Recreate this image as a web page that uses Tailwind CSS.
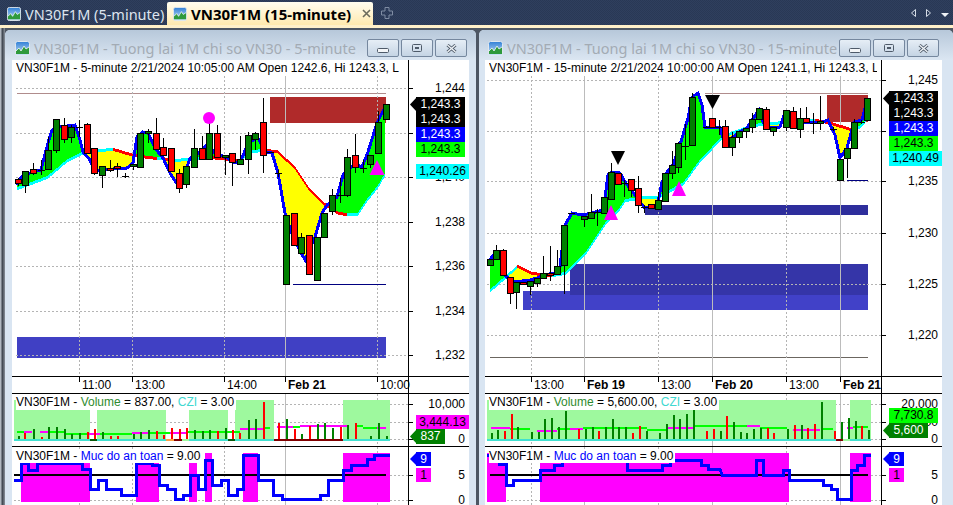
<!DOCTYPE html>
<html lang="en">
<head>
    <meta charset="UTF-8">
    <title>VN30F1M charts</title>
    <script src="https://cdn.jsdelivr.net/npm/@tailwindcss/browser@4"></script>
</head>
<body class="w-[953px] h-[505px] overflow-hidden bg-[#d9e5f2] font-['Liberation_Sans',sans-serif] text-[12px] leading-[14px] text-black">
    <svg class="absolute w-0 h-0">
        <defs>
            <linearGradient id="sky" x1="0" y1="0" x2="0" y2="1"><stop offset="0" stop-color="#2f7fd6"/><stop offset="1" stop-color="#cfe6fa"/></linearGradient>
        </defs>
        <symbol id="chartIcon" viewBox="0 0 15 15">
            <rect x="0.5" y="0.5" width="14" height="14" rx="2" fill="url(#sky)" stroke="#dfe7ef"/>
            <path d="M1 13 L1 10 L4 7 L6 10 L9 5 L11 8 L14 6 L14 13 Z" fill="#2f9a3c"/>
            <path d="M1 10 L4 7 L6 10 L9 5 L11 8 L14 6" fill="none" stroke="#f4f8fb" stroke-width="0.8"/>
        </symbol>
    </svg>

    <!-- Tab strip -->
    <div class="h-[25px] flex items-end relative bg-[repeating-conic-gradient(#2f3f5e_0_25%,#293855_0_50%)] bg-[length:2px_2px]">
        <div class="w-[167px] h-[23px] flex items-center pl-[7px] gap-[4px] font-['Noto_Sans',sans-serif] text-[14.5px] whitespace-nowrap text-[#dde4ee]">
            <svg class="w-[14px] h-[14px]"><use href="#chartIcon"/></svg>
            <span>VN30F1M (5-minute)</span>
        </div>
        <div class="w-[206px] h-[23px] flex items-center pl-[6px] gap-[4px] rounded-t-[2px] bg-gradient-to-b from-[#fffdf0] to-[#ffe9ae] font-['Noto_Sans',sans-serif] text-[15px] font-bold whitespace-nowrap text-black">
            <svg class="w-[14px] h-[14px]"><use href="#chartIcon"/></svg>
            <span>VN30F1M (15-minute)</span>
            <svg class="w-[9px] h-[9px] ml-[7px]" viewBox="0 0 9 9"><path d="M1 1 L8 8 M8 1 L1 8" stroke="#6b6b5c" stroke-width="1.6"/></svg>
        </div>
        <svg class="w-[12px] h-[12px] ml-[8px] mb-[6px]" viewBox="0 0 12 12"><path d="M4 .5H8V4H11.5V8H8V11.5H4V8H.5V4H4Z" fill="none" stroke="#7f8ca3"/></svg>
        <div class="ml-auto flex items-center gap-[10px] pr-[4px] mb-[8px]">
            <svg class="w-[5px] h-[8px]" viewBox="0 0 5 8"><path d="M4.5 .5V7.5L.5 4Z" fill="none" stroke="#d5dce6"/></svg>
            <svg class="w-[5px] h-[8px]" viewBox="0 0 5 8"><path d="M.5 .5V7.5L4.5 4Z" fill="none" stroke="#d5dce6"/></svg>
            <svg class="w-[8px] h-[4px] mt-[3px]" viewBox="0 0 8 4"><path d="M0 0H8L4 4Z" fill="#eef2f6"/></svg>
        </div>
    </div>
    <div class="h-[3px] bg-[#fff0c9]"></div>

    <div class="h-[477px] flex bg-[#4d5663]">
        <div class="w-[5px] bg-gradient-to-r from-[#cfd6de] via-[#444b55] to-[#8b929b]"></div>

        <!-- Left window -->
        <div class="w-[471px] mt-[2px] rounded-t-[5px] bg-[#d9e5f2]">
            <div class="h-[30px] flex items-center pt-[6px] pl-[10px] pr-[9px] rounded-t-[5px] bg-gradient-to-b from-[#b7c8da] to-[#dbe6f2]">
                <svg class="w-[15px] h-[15px]"><use href="#chartIcon"/></svg>
                <span class="ml-[4px] font-['Noto_Sans',sans-serif] text-[14.5px] leading-[18px] whitespace-nowrap text-[#a3abb4]">VN30F1M - Tuong lai 1M chi so VN30 - 5-minute</span>
                <div class="ml-auto flex gap-[2px]">
                    <button class="w-[32px] h-[18px] flex items-center justify-center rounded-[2px] border border-[#75879e] bg-gradient-to-b from-[#e6eef6] to-[#c5d4e4]"><svg class="w-[12px] h-[5px] mt-[4px]" viewBox="0 0 12 5"><rect x=".5" y=".5" width="11" height="4" rx="1" fill="#f4f6f8" stroke="#4e5a69"/></svg></button>
                    <button class="w-[32px] h-[18px] flex items-center justify-center rounded-[2px] border border-[#75879e] bg-gradient-to-b from-[#e6eef6] to-[#c5d4e4]"><svg class="w-[10px] h-[8px]" viewBox="0 0 10 8"><rect x=".5" y=".5" width="9" height="7" rx="1" fill="none" stroke="#4e5a69"/><rect x="3" y="3" width="4" height="2" fill="#4e5a69"/></svg></button>
                    <button class="w-[32px] h-[18px] flex items-center justify-center rounded-[2px] border border-[#75879e] bg-gradient-to-b from-[#e6eef6] to-[#c5d4e4]"><svg class="w-[11px] h-[9px]" viewBox="0 0 11 9"><path d="M1.5 1 L9.5 8 M9.5 1 L1.5 8" stroke="#4e5a69" stroke-width="3"/><path d="M1.5 1 L9.5 8 M9.5 1 L1.5 8" stroke="#eef2f6" stroke-width="1.4"/></svg></button>
                </div>
            </div>
            <div class="ml-[7px] w-[457px]">
                <div class="flex h-[317px] border-b border-black">
                    <div class="relative w-[396px] bg-white">
                        <svg id="priceL" class="block" width="396" height="316" viewBox="12 60 396 316"></svg>
                        <div class="absolute left-[4px] top-[1px] w-[386px] h-[14px] overflow-hidden whitespace-nowrap">VN30F1M - 5-minute 2/21/2024 10:05:00 AM Open 1242.6, Hi 1243.3, L</div>
                    </div>
                    <div id="priceAxisL" class="relative w-[61px] bg-white border-l border-black"></div>
                </div>
                <div class="flex h-[17px] border-b border-black">
                    <div id="timeL" class="relative w-[396px] bg-white"></div>
                    <div class="w-[61px] bg-white border-l border-black"></div>
                </div>
                <div class="flex h-[53px] border-b border-black">
                    <div class="relative w-[396px] bg-white">
                        <svg id="volL" class="block" width="396" height="52" viewBox="12 394 396 52"></svg>
                        <div class="absolute left-[4px] top-0 h-[16px] leading-[17px] pr-[2px] bg-white whitespace-nowrap">VN30F1M - <span class="text-[#2e8b2e]">Volume</span> = 837.00, <span class="text-[#40d8d0]">CZI</span> = 3.00</div>
                    </div>
                    <div id="volAxisL" class="relative w-[61px] bg-white border-l border-black"></div>
                </div>
                <div class="flex h-[58px]">
                    <div class="relative w-[396px] bg-white">
                        <svg id="safeL" class="block" width="396" height="58" viewBox="12 447 396 58"></svg>
                        <div class="absolute left-[4px] top-[2px] h-[14px] pr-[2px] bg-white whitespace-nowrap">VN30F1M - <span class="text-[#0000ff]">Muc do an toan</span> = 9.00</div>
                    </div>
                    <div id="safeAxisL" class="relative w-[61px] bg-white border-l border-black"></div>
                </div>
            </div>
        </div>

        <div class="w-[3px]"></div>

        <!-- Right window -->
        <div class="w-[474px] mt-[2px] rounded-t-[5px] bg-[#d9e5f2]">
            <div class="h-[30px] flex items-center pt-[6px] pl-[9px] pr-[14px] rounded-t-[5px] bg-gradient-to-b from-[#b7c8da] to-[#dbe6f2]">
                <svg class="w-[15px] h-[15px]"><use href="#chartIcon"/></svg>
                <span class="ml-[4px] font-['Noto_Sans',sans-serif] text-[14.5px] leading-[18px] whitespace-nowrap text-[#a3abb4]">VN30F1M - Tuong lai 1M chi so VN30 - 15-minute</span>
                <div class="ml-auto flex gap-[2px]">
                    <button class="w-[32px] h-[18px] flex items-center justify-center rounded-[2px] border border-[#75879e] bg-gradient-to-b from-[#e6eef6] to-[#c5d4e4]"><svg class="w-[12px] h-[5px] mt-[4px]" viewBox="0 0 12 5"><rect x=".5" y=".5" width="11" height="4" rx="1" fill="#f4f6f8" stroke="#4e5a69"/></svg></button>
                    <button class="w-[32px] h-[18px] flex items-center justify-center rounded-[2px] border border-[#75879e] bg-gradient-to-b from-[#e6eef6] to-[#c5d4e4]"><svg class="w-[10px] h-[8px]" viewBox="0 0 10 8"><rect x=".5" y=".5" width="9" height="7" rx="1" fill="none" stroke="#4e5a69"/><rect x="3" y="3" width="4" height="2" fill="#4e5a69"/></svg></button>
                    <button class="w-[32px] h-[18px] flex items-center justify-center rounded-[2px] border border-[#75879e] bg-gradient-to-b from-[#e6eef6] to-[#c5d4e4]"><svg class="w-[11px] h-[9px]" viewBox="0 0 11 9"><path d="M1.5 1 L9.5 8 M9.5 1 L1.5 8" stroke="#4e5a69" stroke-width="3"/><path d="M1.5 1 L9.5 8 M9.5 1 L1.5 8" stroke="#eef2f6" stroke-width="1.4"/></svg></button>
                </div>
            </div>
            <div class="ml-[6px] w-[457px]">
                <div class="flex h-[317px] border-b border-black">
                    <div class="relative w-[396px] bg-white">
                        <svg id="priceR" class="block" width="396" height="316" viewBox="485 60 396 316"></svg>
                        <div class="absolute left-[4px] top-[1px] w-[388px] h-[14px] overflow-hidden whitespace-nowrap">VN30F1M - 15-minute 2/21/2024 10:00:00 AM Open 1241.1, Hi 1243.3, L</div>
                    </div>
                    <div id="priceAxisR" class="relative w-[61px] bg-white border-l border-black"></div>
                </div>
                <div class="flex h-[17px] border-b border-black">
                    <div id="timeR" class="relative w-[396px] bg-white"></div>
                    <div class="w-[61px] bg-white border-l border-black"></div>
                </div>
                <div class="flex h-[53px] border-b border-black">
                    <div class="relative w-[396px] bg-white">
                        <svg id="volR" class="block" width="396" height="52" viewBox="485 394 396 52"></svg>
                        <div class="absolute left-[4px] top-0 h-[16px] leading-[17px] pr-[2px] bg-white whitespace-nowrap">VN30F1M - <span class="text-[#2e8b2e]">Volume</span> = 5,600.00, <span class="text-[#40d8d0]">CZI</span> = 3.00</div>
                    </div>
                    <div id="volAxisR" class="relative w-[61px] bg-white border-l border-black"></div>
                </div>
                <div class="flex h-[58px]">
                    <div class="relative w-[396px] bg-white">
                        <svg id="safeR" class="block" width="396" height="58" viewBox="485 447 396 58"></svg>
                        <div class="absolute left-[4px] top-[2px] h-[14px] pr-[2px] bg-white whitespace-nowrap">VN30F1M - <span class="text-[#0000ff]">Muc do an toan</span> = 9.00</div>
                    </div>
                    <div id="safeAxisR" class="relative w-[61px] bg-white border-l border-black"></div>
                </div>
            </div>
        </div>
    </div>

    <script>
        const GREEN = "#008000", RED = "#ff0000";

        // [x, bodyTop, bodyBottom, wickTop, wickBottom, colour]
        const candlesL = [
            [18,179,183,178,186,RED],[25,171,185,171,193,GREEN],[33,169,173,163,175,RED],[41,170,171,160,175,GREEN],
            [48,150,169,137,170,GREEN],[56,119,150,119,153,GREEN],[64,125,139,118,143,RED],[71,127,137,125,143,GREEN],
            [79,127,128,120,137,GREEN],[87,124,153,123,153,RED],[94,148,173,148,175,RED],[102,166,175,166,188,GREEN],
            [110,168,170,160,172,RED],[117,166,168,163,177,RED],[125,176,176,173,178,GREEN],[133,164,166,164,170,GREEN],
            [140,133,167,133,167,GREEN],[148,131,133,129,143,GREEN],[156,133,149,118,149,RED],[163,147,155,138,155,RED],
            [171,148,171,148,171,RED],[179,173,188,169,193,RED],[186,166,184,166,188,GREEN],[194,148,167,129,168,GREEN],
            [202,148,159,136,159,RED],[209,133,159,123,159,GREEN],[217,133,157,125,157,RED],[225,155,157,155,175,GREEN],
            [232,153,162,153,186,RED],[240,159,164,136,164,GREEN],[248,135,159,132,174,GREEN],[255,133,139,132,150,GREEN],
            [263,122,155,98,173,RED],[270,152,152,152,153,GREEN],[278,173,173,170,177,GREEN],[286,215,284,215,284,GREEN],
            [294,213,245,213,245,RED],[301,237,253,233,253,GREEN],[309,235,274,235,274,RED],[317,237,280,237,280,GREEN],
            [324,213,237,213,237,GREEN],[332,195,211,189,215,GREEN],[340,195,195,178,203,GREEN],[347,157,195,149,197,GREEN],
            [355,155,167,134,173,RED],[363,168,168,160,173,GREEN],[370,155,164,155,168,GREEN],[378,122,153,111,153,GREEN],
            [386,104,119,104,119,GREEN]
        ];
        const fastL = [[17,185],[22,176],[33,172],[41,170],[48,143],[52,130],[60,127],[75,125],[80,140],[83,152],[90,160],[94,170],[102,170],[113,169],[127,168],[133,163],[137,137],[143,132],[148,133],[155,148],[163,158],[170,173],[177,184],[183,180],[190,158],[200,152],[209,142],[213,152],[227,158],[233,162],[240,163],[248,143],[258,138],[265,152],[272,153],[278,173],[285,213],[293,237],[305,260],[315,237],[322,213],[327,205],[337,197],[343,175],[355,164],[362,167],[368,152],[377,123],[385,107]];
        const slowL = [[17,188],[47,177],[67,160],[83,152],[97,150],[113,149],[117,150],[133,155],[157,158],[163,158],[170,160],[190,159],[210,157],[240,160],[250,151],[265,150],[277,151],[295,168],[308,188],[323,203],[338,213],[347,214],[357,214],[368,198],[377,187],[385,173]];

        const candlesR = [
            [490,259,265,259,265,GREEN],[496,250,259,245,259,GREEN],[503,250,275,249,275,RED],[510,277,293,277,304,RED],
            [516,282,292,282,309,GREEN],[523,282,284,282,284,RED],[530,281,286,281,295,GREEN],[537,278,283,278,287,GREEN],
            [543,273,278,256,278,GREEN],[550,273,275,246,281,RED],[557,266,274,250,274,GREEN],[564,225,265,225,294,GREEN],
            [571,213,213,213,214,GREEN],[584,216,219,216,227,GREEN],[591,212,218,194,218,GREEN],[597,212,212,209,226,GREEN],
            [604,197,213,197,213,GREEN],[611,172,199,163,199,GREEN],[618,173,184,173,184,RED],[624,183,183,180,197,GREEN],
            [631,179,190,179,197,RED],[638,188,205,176,213,RED],[644,207,207,205,213,GREEN],[651,204,208,204,208,RED],
            [658,200,209,192,209,GREEN],[665,173,201,173,201,GREEN],[672,165,173,151,179,GREEN],[678,143,167,142,173,GREEN],
            [685,146,146,124,160,GREEN],[692,97,145,93,145,GREEN],[712,118,127,118,127,RED],[706,127,127,126,128,GREEN],
            [719,127,127,120,135,GREEN],[725,126,147,120,147,RED],[732,137,147,132,156,GREEN],[739,131,137,131,143,GREEN],
            [746,128,131,128,138,GREEN],[752,119,127,113,133,GREEN],[759,108,119,108,119,GREEN],[766,109,129,107,129,RED],
            [773,127,131,127,136,GREEN],[786,110,127,110,131,GREEN],[793,111,128,107,128,RED],[800,118,129,108,138,GREEN],
            [806,118,122,107,122,RED],[813,123,123,113,134,GREEN],[820,121,123,96,130,GREEN],[833,129,129,127,131,GREEN],
            [840,159,180,159,180,GREEN],[847,148,158,148,178,GREEN],[854,122,148,119,148,GREEN],[861,122,122,120,124,GREEN],
            [867,98,120,98,120,GREEN]
        ];
        const fastR = [[490,260],[493,255],[500,252],[505,275],[510,280],[515,282],[530,280],[537,278],[543,275],[555,273],[560,267],[565,225],[572,213],[582,215],[592,213],[603,210],[605,198],[608,175],[612,172],[620,173],[625,182],[633,192],[638,200],[645,208],[657,207],[662,182],[667,172],[673,165],[680,145],[688,118],[692,97],[698,93],[702,105],[705,127],[720,127],[723,138],[732,138],[739,132],[747,128],[752,120],[759,110],[765,127],[773,128],[780,127],[785,112],[793,118],[800,122],[820,123],[828,120],[835,135],[840,158],[847,148],[854,122],[862,120],[867,100]];
        const slowR = [[490,290],[505,277],[517,266],[532,273],[552,275],[558,274],[565,273],[585,253],[605,223],[618,210],[625,200],[645,197],[658,197],[683,183],[700,160],[722,137],[733,132],[747,127],[760,124],[800,120.5],[815,120],[828,122],[853,130],[860,126],[868,117]];

        // [x, top, colour]
        const volL = [[18,436,GREEN],[24,433,RED],[33,429,GREEN],[41,437,RED],[48,427,GREEN],[56,427,GREEN],[64,429,GREEN],[71,434,GREEN],[79,433,GREEN],[87,432,RED],[94,429,RED],[102,432,GREEN],[110,436,RED],[117,436,RED],[133,434,GREEN],[140,432,GREEN],[148,430,GREEN],[156,431,RED],[163,435,RED],[171,428,RED],[179,429,RED],[186,428,RED],[194,430,GREEN],[202,431,GREEN],[209,430,GREEN],[217,431,RED],[225,428,GREEN],[232,430,RED],[239,433,RED],[248,420,GREEN],[255,419,GREEN],[263,402,RED],[278,423,RED],[286,419,GREEN],[294,429,RED],[301,434,GREEN],[309,426,RED],[317,424,GREEN],[324,423,GREEN],[332,428,GREEN],[340,427,RED],[347,425,GREEN],[355,423,RED],[370,436,GREEN],[378,423,GREEN],[386,436,GREEN]];
        const volR = [[491,433,GREEN],[497,430,GREEN],[504,431,RED],[511,414,RED],[517,427,GREEN],[531,432,GREEN],[538,432,GREEN],[544,419,GREEN],[551,418,GREEN],[558,427,GREEN],[565,411,GREEN],[578,429,RED],[585,429,GREEN],[592,427,GREEN],[598,431,RED],[605,427,GREEN],[612,419,GREEN],[618,427,GREEN],[625,427,GREEN],[632,433,RED],[639,426,RED],[646,431,GREEN],[659,433,GREEN],[666,424,GREEN],[673,415,GREEN],[679,419,GREEN],[686,414,GREEN],[693,410,GREEN],[706,431,RED],[713,429,RED],[720,431,GREEN],[726,416,RED],[733,422,GREEN],[740,432,GREEN],[746,433,GREEN],[753,429,GREEN],[760,428,GREEN],[767,428,RED],[773,433,RED],[787,429,GREEN],[794,425,RED],[801,425,GREEN],[807,428,RED],[814,424,RED],[821,402,GREEN],[834,431,RED],[841,422,GREEN],[848,418,GREEN],[855,421,GREEN],[861,426,RED],[868,430,GREEN]];

        // [x1, x2, y, colour] moving average pieces on the volume pane
        const MAG = "#ff00ff", LIME = "#00ff00";
        const maL = [[17,24,431,LIME],[24,32,431,MAG],[40,48,431,MAG],[48,65,431,LIME],[65,87,433,LIME],[87,100,433,MAG],[100,132,433,LIME],[132,150,432,MAG],[150,170,432,LIME],[170,186,432,MAG],[186,240,431,LIME],[240,263,428,MAG],[263,270,427,LIME],[277,293,426,MAG],[293,300,426,LIME],[300,347,425,MAG],[355,363,425,LIME],[363,377,427,LIME],[377,386,427,MAG]];
        const maR = [[491,510,427,MAG],[510,530,428,LIME],[537,557,430,MAG],[557,570,428,LIME],[570,583,428,MAG],[583,647,427,LIME],[647,667,429,LIME],[667,693,427,MAG],[693,760,425,LIME],[747,760,425,MAG],[760,787,427,LIME],[793,820,429,MAG],[823,833,428,LIME],[847,853,427,MAG],[853,868,426,LIME]];

        const safeLineL = [[14,480],[21,480],[21,463],[28,463],[28,470],[37,470],[37,463],[82,463],[82,469],[90,469],[90,489],[98,489],[98,480],[106,480],[106,489],[121,489],[121,495],[136,495],[136,463],[152,463],[152,465],[159,465],[159,485],[167,485],[167,489],[175,489],[175,499],[183,499],[183,495],[190,495],[190,475],[198,475],[198,489],[205,489],[205,460],[212,460],[212,485],[221,485],[221,480],[228,480],[228,495],[237,495],[237,489],[243,489],[243,455],[258,455],[258,480],[273,480],[273,495],[282,495],[282,499],[320,499],[320,495],[328,495],[328,480],[343,480],[343,470],[351,470],[351,465],[367,465],[367,459],[374,459],[374,455],[390,455]];
        const safeLineR = [[487,455],[499,455],[499,464],[506,464],[506,485],[513,485],[513,480],[540,480],[540,470],[554,470],[554,465],[562,465],[562,460],[627,460],[627,470],[662,470],[662,465],[670,465],[670,460],[701,460],[701,465],[708,465],[708,469],[720,469],[722,475],[756,475],[756,460],[763,460],[763,475],[783,475],[783,470],[789,470],[789,480],[823,480],[823,485],[831,485],[831,489],[837,489],[837,499],[851,499],[851,470],[857,470],[857,465],[864,465],[864,455],[871,455]];

        function rect(x, y, w, h, fill) {
            return `<rect x="${x}" y="${y}" width="${w}" height="${h}" fill="${fill}" shape-rendering="crispEdges"/>`;
        }
        function tri(a, b, c, fill) {
            return `<polygon points="${a} ${b} ${c}" fill="${fill}"/>`;
        }
        function at(points, x) {
            for (let i = 1; i < points.length; i++) {
                const [x0, y0] = points[i - 1], [x1, y1] = points[i];
                if (x <= x1) return y0 + (y1 - y0) * (x - x0) / (x1 - x0);
            }
            return points[points.length - 1][1];
        }
        // Grid: dotted lines on the hour ticks, solid grey on day breaks
        function grid(x0, x1, y0, y1, dotted, solid, rows) {
            let s = "";
            for (const x of dotted) s += `<path d="M${x}.5 ${y0}V${y1}" stroke="#b4b4b4" stroke-dasharray="2 2" shape-rendering="crispEdges"/>`;
            for (const x of solid) s += `<path d="M${x}.5 ${y0}V${y1}" stroke="#bcbcbc" shape-rendering="crispEdges"/>`;
            for (const y of rows) s += `<path d="M${x0} ${y}.5H${x1}" stroke="#b4b4b4" stroke-dasharray="2 2" shape-rendering="crispEdges"/>`;
            return s;
        }
        function ribbon(fast, slow) {
            let s = "";
            const start = fast[0][0], end = fast[fast.length - 1][0];
            for (let x = start; x < end; x++) {
                const f = at(fast, x), m = at(slow, x);
                s += rect(x, Math.min(f, m), 1, Math.abs(f - m), f < m ? LIME : "#ffff00");
            }
            for (let x = start; x < end; x++) {
                const m = at(slow, x), next = at(slow, x + 1);
                s += rect(x, Math.round(m) - 1, 1, 3, next <= m ? "#00ffff" : "#ff0000");
            }
            s += `<polyline points="${fast.join(" ")}" fill="none" stroke="#0000ff" stroke-width="3" shape-rendering="crispEdges"/>`;
            return s;
        }
        function candles(list) {
            let s = "";
            for (const [x, top, bottom, wickTop, wickBottom, colour] of list) {
                s += rect(x, wickTop, 1, wickBottom - wickTop, "#000");
                s += bottom - top < 2
                    ? rect(x - 3, top, 7, 1, "#000")
                    : `<rect x="${x - 2.5}" y="${top + 0.5}" width="6" height="${bottom - top}" fill="${colour}" stroke="#000" shape-rendering="crispEdges"/>`;
            }
            return s;
        }
        function bars(list) {
            return list.map(([x, top, c]) => rect(x, top, 2, 439 - top, c)).join("");
        }
        function segments(list) {
            return list.map(([a, b, y, c]) => rect(a, y, b - a, 2, c)).join("");
        }
        function stepLine(points) {
            return `<polyline points="${points.join(" ")}" fill="none" stroke="#0000ff" stroke-width="3" shape-rendering="crispEdges"/>`;
        }

        // Left window panes
        const hL = [88, 133, 177, 222, 266, 311, 355];
        document.getElementById("priceL").innerHTML =
            rect(270, 97, 116, 26, "#b02a2a") + rect(17, 337, 369, 21, "#4040c4") +
            rect(17, 93, 369, 1, "#b08c8c") +
            grid(16, 408, 76, 376, [79, 132, 224, 377], [285], hL) +
            ribbon(fastL, slowL) + rect(293, 284, 93, 1, "#000080") + candles(candlesL) +
            `<circle cx="209" cy="118" r="6" fill="#ff00ff"/>` + tri("377 160", "369.5 175", "384.5 175", MAG);
        document.getElementById("volL").innerHTML =
            grid(14, 408, 394, 446, [79, 132, 224, 377], [285], [404, 422, 439]) +
            rect(14, 400, 76, 39, "#9ef99e") + rect(97, 400, 69, 39, "#9ef99e") + rect(189, 400, 39, 39, "#9ef99e") +
            rect(235, 400, 39, 39, "#9ef99e") + rect(343, 400, 47, 39, "#9ef99e") +
            rect(14, 439, 376, 2, "#40e0d0") + rect(90, 439, 7, 2, "#0a5a0a") + rect(166, 439, 8, 2, "#ffa040") +
            rect(174, 439, 8, 2, "#800000") + rect(182, 439, 7, 2, "#9ef99e") + rect(228, 439, 7, 2, "#0a5a0a") + rect(274, 439, 69, 2, "#800000") +
            segments(maL) + bars(volL);
        document.getElementById("safeL").innerHTML =
            grid(14, 408, 447, 505, [79, 132, 224, 377], [285], [475, 500]) +
            [[21, 69], [136, 23], [189, 8], [205, 7], [243, 15], [343, 47]].map(([x, w]) => rect(x, 453, w, 49, MAG)).join("") +
            rect(14, 474, 372, 2, "#000") + stepLine(safeLineL);

        // Right window panes
        const hR = [80, 131, 181, 233, 284, 335];
        document.getElementById("priceR").innerHTML =
            rect(827, 95, 41, 27, "#b02a2a") + rect(705, 93, 163, 1, "#b08c8c") +
            rect(645, 205, 223, 10, "#2e2e9c") + rect(523, 291, 345, 19, "#4141c8") + rect(570, 264, 298, 31, "#3535a8") +
            rect(490, 357, 378, 1, "#6b6660") +
            grid(487, 881, 76, 376, [531, 658, 786], [584, 712, 840], hR) +
            ribbon(fastR, slowR) + rect(847, 180, 21, 1, "#000080") + candles(candlesR) +
            tri("611 151", "625 151", "618 165", "#000") + tri("705 95", "720 95", "712.5 109", "#000") +
            tri("679 181", "672 196", "686 196", MAG) + tri("611 205", "604 220", "618 220", MAG);
        document.getElementById("volR").innerHTML =
            grid(487, 881, 394, 446, [531, 658, 786], [584, 712, 840], [404, 422, 439]) +
            rect(487, 400, 349, 39, "#9ef99e") + rect(850, 400, 21, 39, "#9ef99e") +
            rect(487, 439, 384, 2, "#40e0d0") + rect(836, 439, 7, 2, "#800000") + rect(843, 439, 7, 2, "#9ef99e") +
            segments(maR) + bars(volR);
        document.getElementById("safeR").innerHTML =
            grid(487, 881, 447, 505, [531, 658, 786], [584, 712, 840], [475, 500]) +
            [[487, 19], [540, 249], [850, 21]].map(([x, w]) => rect(x, 453, w, 49, MAG)).join("") +
            rect(490, 474, 378, 2, "#000") + stepLine(safeLineR);

        // Axis labels, each with its tick
        function labels(id, top, list) {
            document.getElementById(id).innerHTML += list.map(([y, text]) =>
                `<div class="absolute left-0 w-[4px] h-px bg-black" style="top:${y - top}px"></div>` +
                (text === "" ? "" : `<div class="absolute right-[4px] h-[14px] whitespace-nowrap" style="top:${y - top - 7}px">${text}</div>`)
            ).join("");
        }
        // Price tags sitting on the axis; the ones marked with an arrow point back at the plot
        function tag(id, top, y, h, w, classes, text, arrowClass) {
            const arrow = arrowClass ? `<div class="absolute left-px w-[7px] ${arrowClass} [clip-path:polygon(100%_0,0_50%,100%_100%)]" style="top:${y - top}px;height:${h}px"></div>` : "";
            document.getElementById(id).innerHTML += arrow +
                `<div class="absolute left-[7px] text-center ${classes}" style="top:${y - top}px;height:${h}px;width:${w}px;line-height:${h}px">${text}</div>`;
        }
        function timeLabels(id, x0, list) {
            document.getElementById(id).innerHTML = list.map(([x, text, bold]) =>
                `<div class="absolute top-0 w-px h-[5px] bg-black" style="left:${x - x0}px"></div>` +
                `<div class="absolute top-[1px] whitespace-nowrap z-10 ${bold ? "font-bold" : ""}" style="left:${x - x0 + 3}px">${text}</div>`
            ).join("");
        }

        labels("priceAxisL", 60, [[88, "1,244"], [133, "1,242"], [177, "1,240"], [222, "1,238"], [266, "1,236"], [311, "1,234"], [355, "1,232"]]);
        tag("priceAxisL", 60, 97, 15, 49, "bg-black text-white", "1,243.3", "bg-black");
        tag("priceAxisL", 60, 112, 15, 49, "bg-black text-white", "1,243.3");
        tag("priceAxisL", 60, 127, 15, 49, "bg-[#0000ff] text-white", "1,243.3");
        tag("priceAxisL", 60, 142, 15, 49, "bg-[#00ff00] text-black", "1,243.3");
        tag("priceAxisL", 60, 164, 15, 53, "bg-[#00ffff] text-black", "1,240.26");
        timeLabels("timeL", 12, [[79, "11:00"], [132, "13:00"], [224, "14:00"], [285, "Feb 21", true], [377, "10:00"]]);
        labels("volAxisL", 394, [[404, "10,000"], [422, ""], [439, "0"]]);
        tag("volAxisL", 394, 415, 14, 53, "bg-[#ff00ff] text-black", "3,444.13");
        tag("volAxisL", 394, 429, 15, 29, "bg-[#008000] text-white", "837", "bg-[#008000]");
        labels("safeAxisL", 447, [[475, "5"], [500, "0"]]);
        tag("safeAxisL", 447, 452, 14, 15, "bg-[#0000ff] text-white", "9", "bg-[#0000ff]");
        tag("safeAxisL", 447, 468, 14, 15, "bg-[#ff00ff] text-black", "1");

        labels("priceAxisR", 60, [[80, "1,245"], [131, "1,240"], [181, "1,235"], [233, "1,230"], [284, "1,225"], [335, "1,220"]]);
        tag("priceAxisR", 60, 91, 15, 49, "bg-black text-white", "1,243.3", "bg-black");
        tag("priceAxisR", 60, 106, 15, 49, "bg-black text-white", "1,243.3");
        tag("priceAxisR", 60, 121, 15, 49, "bg-[#0000ff] text-white", "1,243.3");
        tag("priceAxisR", 60, 136, 15, 49, "bg-[#00ff00] text-black", "1,243.3");
        tag("priceAxisR", 60, 151, 15, 53, "bg-[#00ffff] text-black", "1,240.49");
        timeLabels("timeR", 485, [[531, "13:00"], [584, "Feb 19", true], [658, "13:00"], [712, "Feb 20", true], [786, "13:00"], [840, "Feb 21", true]]);
        labels("volAxisR", 394, [[404, "20,000"], [422, "10,000"], [439, "0"]]);
        tag("volAxisR", 394, 408, 15, 49, "bg-[#00ff00] text-black", "7,730.8");
        tag("volAxisR", 394, 423, 15, 39, "bg-[#008000] text-white", "5,600", "bg-[#008000]");
        labels("safeAxisR", 447, [[475, "5"], [500, "0"]]);
        tag("safeAxisR", 447, 452, 14, 15, "bg-[#0000ff] text-white", "9", "bg-[#0000ff]");
        tag("safeAxisR", 447, 468, 14, 15, "bg-[#ff00ff] text-black", "1");
    </script>
</body>
</html>
